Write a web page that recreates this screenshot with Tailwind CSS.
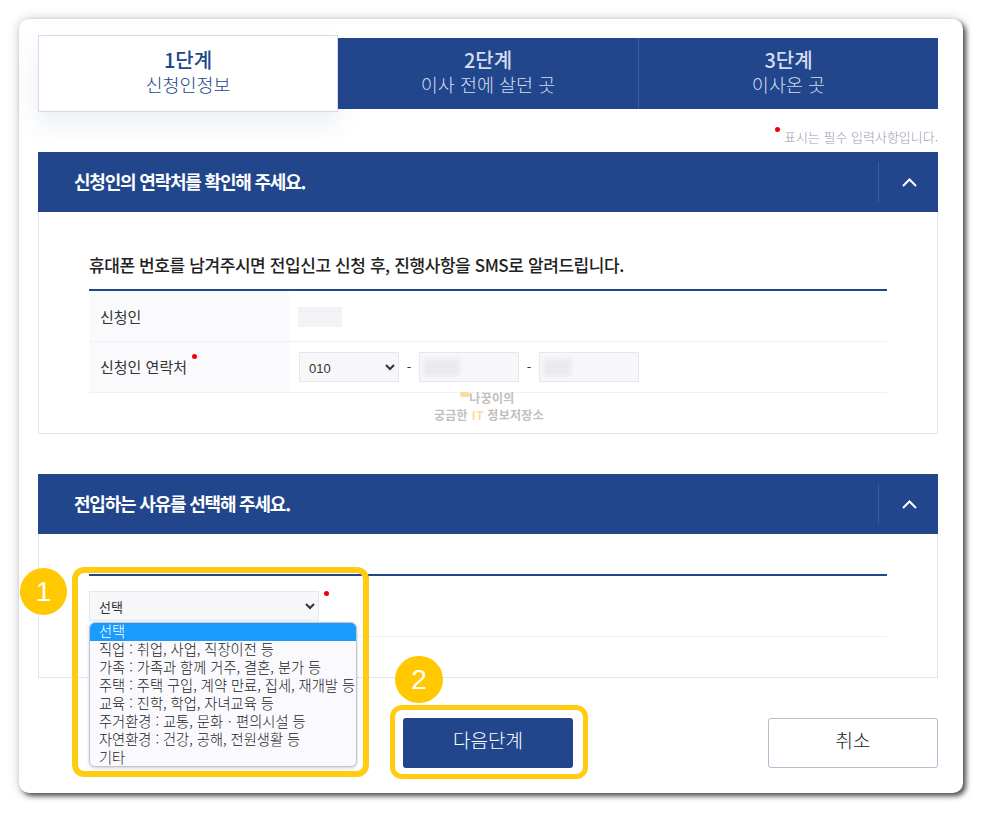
<!DOCTYPE html>
<html lang="ko">
<head>
  <meta charset="UTF-8" />
  <meta name="viewport" content="width=device-width, initial-scale=1" />
  <title>전입신고 - 1단계</title>
  <script src="https://cdn.jsdelivr.net/npm/@tailwindcss/browser@4"></script>
</head>
<body class="bg-white w-[990px] h-[820px] overflow-hidden font-['Noto_Sans_CJK_KR','Noto_Sans',sans-serif] text-[#333]">

  <!-- Card -->
  <div class="relative ml-[19px] mt-[19px] w-[944px] h-[774px] bg-white rounded-[10px] pt-[19px] pl-[19px] shadow-[3px_3px_5px_rgba(0,0,0,0.65),0_0_12px_rgba(0,0,0,0.2)]">

    <!-- Steps -->
    <div class="flex w-[900px] h-[71px] bg-[#21468c] text-[#d3dcf0]">
      <div class="relative z-10 w-[300px] h-[77px] -mt-[3px] bg-white border border-[#d8d8ee] text-[#21468c] flex flex-col items-center justify-center pb-[4px] shadow-[0_12px_24px_rgba(33,70,140,0.09)]">
        <span class="text-[20px] leading-[24px] font-medium">1단계</span>
        <span class="text-[18.5px] leading-[24px] font-light">신청인정보</span>
      </div>
      <div class="w-[300px] flex flex-col items-center justify-center pb-[3px]">
        <span class="text-[20px] leading-[24px] font-medium">2단계</span>
        <span class="text-[18.5px] leading-[24px] font-light">이사 전에 살던 곳</span>
      </div>
      <div class="w-[300px] flex flex-col items-center justify-center pb-[3px] border-l border-[#3a5d9e]">
        <span class="text-[20px] leading-[24px] font-medium">3단계</span>
        <span class="text-[18.5px] leading-[24px] font-light">이사온 곳</span>
      </div>
    </div>

    <!-- Required note -->
    <div class="w-[900px] h-[43px] flex justify-end items-start pt-[19px]">
      <span class="w-[5px] h-[5px] rounded-full bg-[#f00000] mr-[4px] mt-[-1px]"></span>
      <span class="text-[13px] leading-[18px] font-light text-[#9a9ab0]">표시는 필수 입력사항입니다.</span>
    </div>

    <!-- Section 1 -->
    <div class="w-[900px] h-[60px] bg-[#21468c] flex items-center justify-between pl-[36px] text-white">
      <h2 class="text-[18px] font-bold tracking-[-1.2px] pb-[2px]">신청인의 연락처를 확인해 주세요.</h2>
      <div class="w-[60px] h-[40px] border-l border-[#3a5d9e] flex items-center justify-center pl-[1px]">
        <svg width="15" height="9" viewBox="0 0 15 9" fill="none" stroke="white" stroke-width="2"><path d="M1 8l6.5-6.5 6.5 6.5" /></svg>
      </div>
    </div>
    <div class="w-[900px] h-[222px] border border-t-0 border-[#e4e4ee] px-[50px] pt-[40px]">
      <h3 class="text-[17px] leading-[25px] font-medium tracking-[-0.4px] text-[#222] pb-[12px] border-b-2 border-[#21468c]">휴대폰 번호를 남겨주시면 전입신고 신청 후, 진행사항을 SMS로 알려드립니다.</h3>
      <div class="flex h-[51px] border-b border-[#f0f0f5]">
        <div class="w-[200px] bg-[#fafafc] pl-[11px] pt-[2px] flex items-center text-[15px]">신청인</div>
        <div class="pl-[9px] flex items-center"><div class="w-[44px] h-[20px] mt-[1px] bg-[#f3f3f7]"></div></div>
      </div>
      <div class="flex h-[51px] border-b border-[#f0f0f5]">
        <div class="w-[200px] bg-[#fafafc] pl-[11px] pt-[1px] flex items-center text-[15px]">
          신청인 연락처<span class="w-[5px] h-[5px] rounded-full bg-[#f00000] mb-[23px] ml-[5px]"></span>
        </div>
        <div class="pl-[10px] flex items-center text-[13px]">
          <select class="w-[100px] h-[30px] pl-[5px] pt-[2px] bg-[#f7f7fa] border border-[#e6e6ee] text-[13px] font-['Liberation_Sans',sans-serif]">
            <option>010</option>
          </select>
          <span class="w-[20px] text-center">-</span>
          <div class="w-[100px] h-[30px] bg-[#f7f7fa] border border-[#e6e6ee] flex items-center pl-[4px]"><div class="w-[36px] h-[17px] bg-[#e9e9f0] blur-[2px]"></div></div>
          <span class="w-[20px] text-center">-</span>
          <div class="w-[100px] h-[30px] bg-[#f7f7fa] border border-[#e6e6ee] flex items-center pl-[4px]"><div class="w-[27px] h-[17px] bg-[#e9e9f0] blur-[2px]"></div></div>
        </div>
      </div>
    </div>

    <!-- Section 2 -->
    <div class="w-[900px] h-[60px] mt-[40px] bg-[#21468c] flex items-center justify-between pl-[36px] text-white">
      <h2 class="text-[18px] font-bold tracking-[-1.2px] pb-[2px]">전입하는 사유를 선택해 주세요.</h2>
      <div class="w-[60px] h-[40px] border-l border-[#3a5d9e] flex items-center justify-center pl-[1px]">
        <svg width="15" height="9" viewBox="0 0 15 9" fill="none" stroke="white" stroke-width="2"><path d="M1 8l6.5-6.5 6.5 6.5" /></svg>
      </div>
    </div>
    <div class="w-[900px] h-[144px] border border-t-0 border-[#e4e4ee] px-[50px] pt-[40px]">
      <div class="border-t-2 border-[#21468c] h-[62px]">
        <div class="flex items-start pt-[15px]">
          <select class="w-[230px] h-[30px] pl-[5px] bg-[#f7f7fa] border border-[#e6e6ee] text-[13px]">
            <option>선택</option>
          </select>
          <span class="w-[5px] h-[5px] rounded-full bg-[#f00000] ml-[5px]"></span>
        </div>
      </div>
      <div class="border-t border-[#f0f0f5]"></div>
    </div>

    <!-- Buttons -->
    <div class="w-[900px] mt-[40px] flex justify-end gap-[195px]">
      <button class="w-[170px] h-[50px] rounded-[3px] bg-[#21468c] text-white text-[19px] font-light pb-[5px]">다음단계</button>
      <button class="w-[170px] h-[50px] rounded-[3px] bg-white border border-[#b9b9d0] text-[#222] text-[19px] font-light pb-[5px]">취소</button>
    </div>

    <!-- Watermark -->
    <div class="absolute left-[395px] top-[370px] w-[150px] text-center text-[12px] leading-[17px] tracking-[0.3px] font-bold text-[#c0c0c0]">
      <div class="relative pl-[6px]"><span class="absolute left-[46px] top-[3px] w-[10px] h-[5px] rounded-sm bg-[#fbdc9c]"></span>나꿍이의</div>
      <div>궁금한 <span class="text-[#fbdc9c]">IT</span> 정보저장소</div>
    </div>

    <!-- Opened dropdown -->
    <div class="absolute left-[70px] top-[603px] w-[268px] h-[145px] bg-[#fafafe] rounded-[6px] border border-[#c4c4d8] overflow-hidden text-[14.25px] leading-[16px] text-[#222] shadow-[0_1px_3px_rgba(0,0,0,0.2)] font-light">
      <div class="bg-[#1a9cff] text-white pl-[9px] h-[18px]">선택</div>
      <div class="pl-[9px] h-[18px] whitespace-nowrap">직업 : 취업, 사업, 직장이전 등</div>
      <div class="pl-[9px] h-[18px] whitespace-nowrap">가족 : 가족과 함께 거주, 결혼, 분가 등</div>
      <div class="pl-[9px] h-[18px] whitespace-nowrap">주택 : 주택 구입, 계약 만료, 집세, 재개발 등</div>
      <div class="pl-[9px] h-[18px] whitespace-nowrap">교육 : 진학, 학업, 자녀교육 등</div>
      <div class="pl-[9px] h-[18px] whitespace-nowrap">주거환경 : 교통, 문화ㆍ편의시설 등</div>
      <div class="pl-[9px] h-[18px] whitespace-nowrap">자연환경 : 건강, 공해, 전원생활 등</div>
      <div class="pl-[9px] h-[18px] whitespace-nowrap">기타</div>
    </div>

    <!-- Annotations -->
    <div class="absolute left-[53px] top-[548px] w-[297px] h-[210px] border-[6px] border-[#ffcc11] rounded-[12px]"></div>
    <div class="absolute left-[371px] top-[686px] w-[198px] h-[74px] border-[5px] border-[#ffcc11] rounded-[12px]"></div>
    <div class="absolute left-[1px] top-[549px] w-[47px] h-[47px] rounded-full bg-[#ffc800] text-white text-[28px] font-['Liberation_Sans',sans-serif] flex items-center justify-center">1</div>
    <div class="absolute left-[376px] top-[637px] w-[48px] h-[47px] rounded-full bg-[#ffc800] text-white text-[28px] font-['Liberation_Sans',sans-serif] flex items-center justify-center">2</div>
  </div>

</body>
</html>
